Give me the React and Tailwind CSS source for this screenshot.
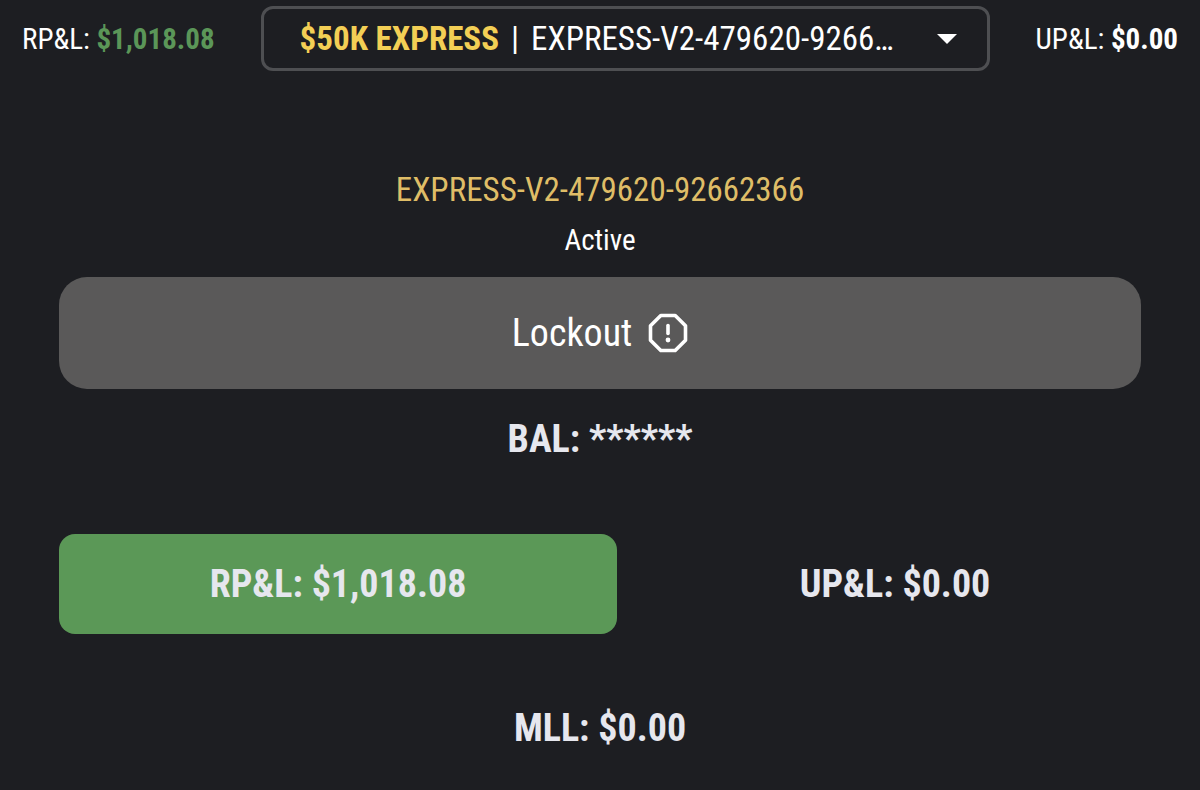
import React, { useState } from 'react';

const accounts = [
  { id: 'EXPRESS-V2-479620-92662366', plan: '$50K EXPRESS' },
];

const shorten = (id, max = 22) => (id.length > max ? `${id.slice(0, max)}…` : id);

function HeaderStat({ label, value, valueClass }) {
  return (
    <p className="shrink-0 whitespace-nowrap text-[29px] leading-9 text-white">
      {label}: <strong className={valueClass}>{value}</strong>
    </p>
  );
}

function AccountPicker({ value, onChange }) {
  const account = accounts.find((a) => a.id === value);

  return (
    <div className="relative flex h-[65px] min-w-0 flex-1 items-center rounded-xl border-3 border-[#4e4f52] pl-9 pr-[30px] text-[33px] leading-10 text-white">
      <span className="shrink-0 whitespace-nowrap font-bold text-[#f3cf55]">{account.plan}</span>
      <span className="mx-3 shrink-0">|</span>
      <span className="whitespace-nowrap">{shorten(account.id)}</span>
      <svg viewBox="0 0 20 10" className="ml-auto h-[10px] w-5 shrink-0 fill-white" aria-hidden="true">
        <path d="M0 0h20L10 10z" />
      </svg>
      {/* native select sits on top of the styled label */}
      <select
        aria-label="Account"
        value={value}
        onChange={(e) => onChange(e.target.value)}
        className="absolute inset-0 h-full w-full cursor-pointer opacity-0"
      >
        {accounts.map((a) => (
          <option key={a.id} value={a.id}>
            {a.plan} | {a.id}
          </option>
        ))}
      </select>
    </div>
  );
}

function OctagonAlert() {
  return (
    <svg
      viewBox="0 0 40 40"
      className="size-10 shrink-0"
      fill="none"
      stroke="currentColor"
      strokeWidth="3.6"
      strokeLinecap="round"
      strokeLinejoin="round"
      aria-hidden="true"
    >
      <path d="M12.8 2.5h14.4L37.5 12.8v14.4L27.2 37.5H12.8L2.5 27.2V12.8z" />
      <path d="M20 12.5v8" />
      <circle cx="20" cy="27" r="2.4" fill="currentColor" stroke="none" />
    </svg>
  );
}

export default function App() {
  const [accountId, setAccountId] = useState(accounts[0].id);

  return (
    <div className="min-h-screen bg-[#1d1e22] font-['Roboto_Condensed','Liberation_Sans_Narrow',Roboto,sans-serif]">
      <header className="flex items-center gap-[46px] px-[22px] pt-[6px]">
        <HeaderStat label="RP&L" value="$1,018.08" valueClass="text-[#5b9658]" />
        <AccountPicker value={accountId} onChange={setAccountId} />
        <HeaderStat label="UP&L" value="$0.00" valueClass="text-white" />
      </header>

      <main className="flex flex-col px-[59px] pt-[99px] text-center text-[38px] leading-[50px] text-[#e6e7ee]">
        <h1 className="text-[33px] leading-10 text-[#dfbd67]">{accountId}</h1>
        <p className="mt-3 text-[29px] leading-9 text-white">Active</p>

        <button
          type="button"
          className="mt-[19px] flex h-28 w-full items-center justify-center gap-4 rounded-[28px] bg-[#5a5959] text-white hover:bg-[#646363]"
        >
          Lockout
          <OctagonAlert />
        </button>

        <p className="mt-[25px] font-bold">BAL: ******</p>

        <div className="mt-[70px] flex gap-8 font-bold">
          <p className="flex-auto rounded-2xl bg-[#5b9857] py-[25px]">RP&amp;L: $1,018.08</p>
          <p className="flex-auto py-[25px]">UP&amp;L: $0.00</p>
        </div>

        <p className="mt-[69px] font-bold">MLL: $0.00</p>
      </main>
    </div>
  );
}
